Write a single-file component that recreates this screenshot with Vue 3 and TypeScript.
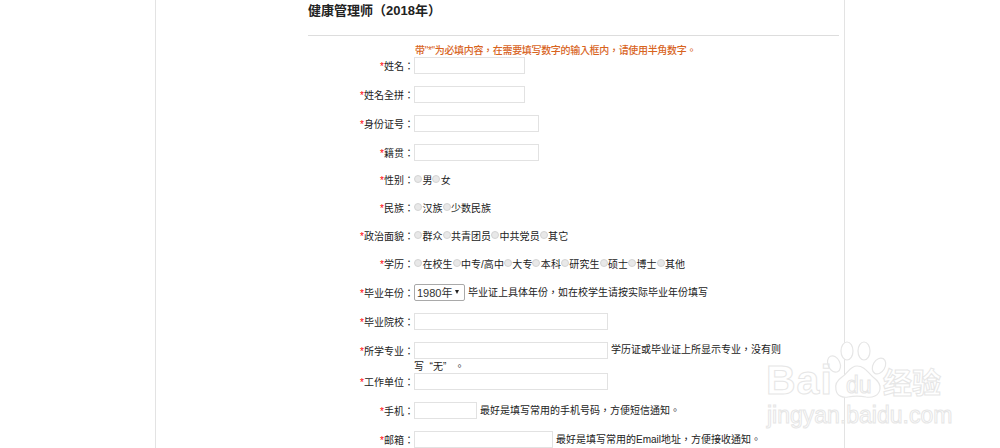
<script setup lang="ts">
interface RadioRow {
  label: string;
  name: string;
  options: string[];
  last?: boolean;
}

const topInputs = [
  { label: "姓名", size: "s" },
  { label: "姓名全拼", size: "s" },
  { label: "身份证号", size: "m" },
  { label: "籍贯", size: "m" },
];

const radios: RadioRow[] = [
  { label: "性别", name: "gender", options: ["男", "女"] },
  { label: "民族", name: "nation", options: ["汉族", "少数民族"] },
  { label: "政治面貌", name: "party", options: ["群众", "共青团员", "中共党员", "其它"] },
  {
    label: "学历",
    name: "edu",
    options: ["在校生", "中专 / 高中", "大专", "本科", "研究生", "硕士", "博士", "其他"],
    last: true,
  },
];
</script>

<template>
  <div class="page">
    <main class="content">
      <h1 class="title">健康管理师（2018年）</h1>
      <hr class="rule" />
      <p class="notice">带"*"为必填内容，在需要填写数字的输入框内，请使用半角数字。</p>

      <form class="form" @submit.prevent>
        <div v-for="row in topInputs" :key="row.label" class="row">
          <label class="label"><em>*</em>{{ row.label }}：</label>
          <div class="field"><input type="text" :class="['inp', row.size]" /></div>
        </div>

        <div
          v-for="row in radios"
          :key="row.name"
          :class="['row', 'row-radio', { 'row-radio-last': row.last }]"
        >
          <label class="label"><em>*</em>{{ row.label }}：</label>
          <div class="field">
            <template v-for="opt in row.options" :key="opt">
              <input type="radio" :name="row.name" class="radio" /><span class="opt">{{ opt.replace(/ /g, "") }}</span>
            </template>
          </div>
        </div>

        <div class="row">
          <label class="label"><em>*</em>毕业年份：</label>
          <div class="field">
            <span class="sel-wrap"><select class="sel"><option>1980年</option></select></span>
            <span class="hint">毕业证上具体年份，如在校学生请按实际毕业年份填写</span>
          </div>
        </div>

        <div class="row">
          <label class="label"><em>*</em>毕业院校：</label>
          <div class="field"><input type="text" class="inp l" /></div>
        </div>

        <div class="row row-wrap">
          <label class="label"><em>*</em>所学专业：</label>
          <div class="field field-wrap">
            <input type="text" class="inp l" /><span class="hint">学历证或毕业证上所显示专业，没有则 写&nbsp;&nbsp;“无”&nbsp;&nbsp;&nbsp;。</span>
          </div>
        </div>

        <div class="row">
          <label class="label"><em>*</em>工作单位：</label>
          <div class="field"><input type="text" class="inp l" /></div>
        </div>

        <div class="row">
          <label class="label"><em>*</em>手机：</label>
          <div class="field">
            <input type="text" class="inp xs" /><span class="hint">最好是填写常用的手机号码，方便短信通知。</span>
          </div>
        </div>

        <div class="row">
          <label class="label"><em>*</em>邮箱：</label>
          <div class="field">
            <input type="text" class="inp ml" /><span class="hint">最好是填写常用的Email地址，方便接收通知。</span>
          </div>
        </div>
      </form>
    </main>

    <div class="mark" aria-hidden="true">
      <svg class="paw" width="70" height="70" viewBox="0 0 70 70">
        <g fill="#fff" stroke="#e6e6e6" stroke-width="1.2">
          <ellipse cx="8" cy="23" rx="6" ry="8.5" transform="rotate(-25 8 23)" />
          <ellipse cx="21" cy="10" rx="6" ry="9" />
          <ellipse cx="38" cy="10" rx="6" ry="9" />
          <ellipse cx="53" cy="25" rx="6" ry="8.5" transform="rotate(30 53 25)" />
          <path d="M31 25c-7 0-9 7-15 11-6 4-7 9-6 13 1 6 7 8 12 7 5-1 13-1 18 0 6 1 13-1 14-8 1-5-3-9-7-12-5-4-8-11-16-11z" />
        </g>
      </svg>
      <span class="bai">Bai</span>
      <span class="du">du</span>
      <span class="jy">经验</span>
      <span class="url">jingyan.baidu.com</span>
    </div>
  </div>
</template>

<style>
html, body { margin: 0; background: #fff; }
</style>

<style scoped>
.page {
  position: relative;
  height: 448px;
  width: 1000px;
  overflow: hidden;
  font: 10px/14px "Liberation Sans", "Noto Sans CJK TC", sans-serif;
  color: #222;
}
.content {
  box-sizing: border-box;
  width: 690px;
  height: 448px;
  margin-left: 155px;
  padding: 0 5px 0 152px;
  border-left: 1px solid #e3e3e3;
  border-right: 1px solid #e3e3e3;
}
.title {
  margin: 0;
  padding-top: 3px;
  height: 33px;
  box-sizing: border-box;
  font-size: 13px;
  line-height: 16px;
  font-weight: 700;
  color: #222;
}
.rule {
  margin: 2px 0 0;
  height: 0;
  border: 0;
  border-top: 1px solid #ddd;
}
.notice {
  margin: 8px 0 0 107px;
  height: 13px;
  line-height: 13px;
  letter-spacing: -0.32px;
  font-weight: 500;
  color: #d8641e;
}
.form { display: flex; flex-direction: column; }
.row { display: flex; align-items: flex-start; margin-bottom: 12px; height: 17px; }
.row-radio { margin-bottom: 13px; height: 15px; }
.row-radio-last { margin-bottom: 12px; }
.row-wrap { margin-bottom: 0; height: 31px; }
.label {
  flex: none;
  box-sizing: border-box;
  width: 106px;
  height: 17px;
  padding-top: 1px;
  text-align: right;
  line-height: 17px;
}
.row-radio .label, .row-radio .field {
  box-sizing: border-box;
  height: 15px;
  line-height: 14px;
  padding-top: 1px;
}
.label em { font-style: normal; color: #f00; }
.field {
  flex: none;
  line-height: 17px;
  white-space: nowrap;
}
.field-wrap {
  width: 370px;
  height: 31px;
  white-space: normal;
  line-height: 15px;
}
.inp {
  box-sizing: border-box;
  height: 17px;
  margin: 0;
  padding: 0 2px;
  border: 1px solid #e2e2e2;
  background: #fff;
  vertical-align: top;
  outline: none;
}
.xs { width: 63px; }
.s { width: 111px; }
.m { width: 125px; }
.ml { width: 139px; }
.l { width: 194px; }
.radio {
  appearance: none;
  box-sizing: border-box;
  width: 8px;
  height: 8px;
  margin: 0 0.4px 0 0;
  border: 1px solid #d4d4d4;
  border-radius: 50%;
  background: #e8e8e8;
  vertical-align: 1px;
}
.opt { letter-spacing: 0.05px; }
.sel-wrap {
  position: relative;
  display: inline-block;
  width: 51px;
  height: 17px;
  vertical-align: top;
}
.sel-wrap::after {
  content: "";
  position: absolute;
  right: 6px;
  top: 6px;
  border-left: 2.5px solid transparent;
  border-right: 2.5px solid transparent;
  border-top: 4px solid #222;
}
.sel {
  appearance: none;
  box-sizing: border-box;
  display: block;
  width: 51px;
  height: 17px;
  margin: 0;
  padding: 0 0 0 2px;
  font: 11px "Liberation Sans", "Noto Sans CJK TC", sans-serif;
  color: #333;
  border: 1px solid #a9a9a9;
  border-radius: 2px;
  background: #fff;
}
.hint { margin-left: 3px; }
.mark {
  position: absolute;
  left: 760px;
  top: 335px;
  width: 200px;
  height: 100px;
  pointer-events: none;
  color: transparent;
  -webkit-text-stroke: 1px #e6e6e6;
}
.paw { position: absolute; left: 66px; top: 6px; }
.bai {
  position: absolute;
  left: 6px;
  top: 22px;
  font: 700 41px/46px "Liberation Sans", sans-serif;
  letter-spacing: 1px;
}
.du {
  position: absolute;
  left: 86px;
  top: 37px;
  font: 400 23px/26px "Liberation Sans", sans-serif;
}
.jy {
  position: absolute;
  left: 123px;
  top: 28px;
  font: 700 29px/36px "Noto Sans CJK SC", sans-serif;
}
.url {
  position: absolute;
  left: 7px;
  top: 67px;
  font: 400 23px/26px "Liberation Sans", sans-serif;
}
</style>
